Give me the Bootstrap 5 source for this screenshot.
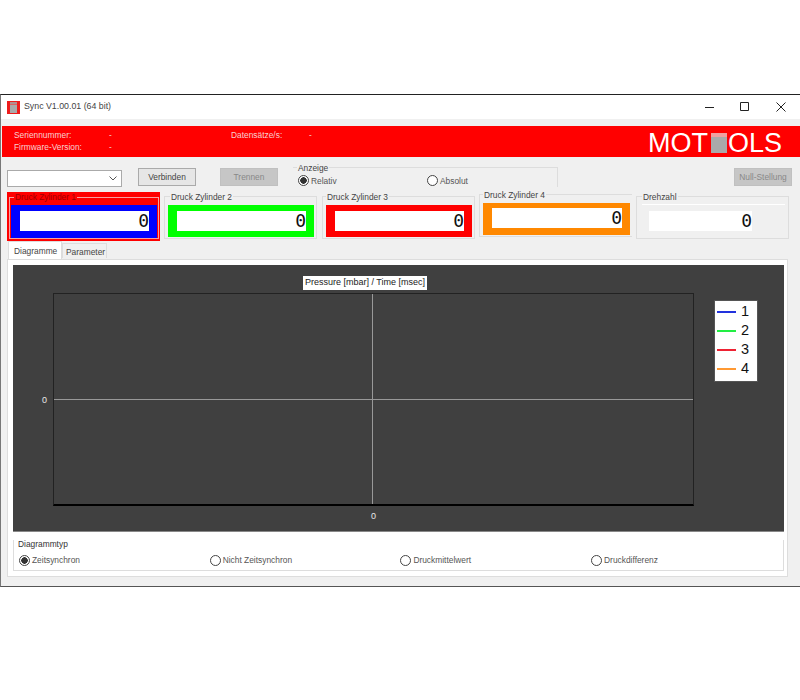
<!DOCTYPE html>
<html lang="de">
<head>
    <meta charset="UTF-8">
    <title>Sync V1.00.01 (64 bit)</title>
    <link href="https://cdn.jsdelivr.net/npm/bootstrap@5.3.0/dist/css/bootstrap.min.css" rel="stylesheet">
    <style>
        body {
            font-family: "Liberation Sans", Arial, sans-serif;
            font-size: 8.4px;
            color: #444;
            background: #fff;
        }
        .app-window {
            margin-top: 94px;
            height: 493px;
            background: #f0f0f0;
            border: 1px solid #555;
            border-top-color: #222;
            border-left-color: #777;
            border-right: 0;
        }
        .title-bar { height: 24px; background: #fff; padding: 0 1px 0 6px; color: #444; font-size: 8.8px; }
        .title-icon { width: 13px; height: 13px; background: #ee1c1c; padding: 1px 3px; margin-right: 4px; }
        .title-icon span { display: block; width: 100%; height: 100%; background: linear-gradient(#b09090 0 2px, #e06060 2px 3px, #aaa 3px); }
        .win-btn { width: 36px; height: 24px; }
        .win-btn-first { width: 35px; }
        .head-gap { height: 7px; }
        .red-head { height: 31px; background: #f00; color: #f8d0d0; margin-left: 1px; padding: 3px 18px 0 12px; }
        .head-col { line-height: 12px; }
        .head-label { width: 95px; }
        .head-label2 { width: 78px; }
        .logo-text { font-size: 27px; line-height: 26px; color: #fff; }
        .logo-box { width: 16px; height: 20px; margin: 0 1px 0 3px; background: linear-gradient(#f0a0a0 0 4px, #aaa 4px); }
        .control-row { height: 35px; padding: 11px 8px 0 6px; }
        .combo { width: 115px; height: 17px; margin-top: 2px; background: #fff; border: 1px solid #aaa; padding-right: 4px; }
        .win-button {
            width: 58px; height: 18px; padding: 0; font-size: 8.4px; line-height: 16px;
            border: 1px solid #aaa; border-radius: 0; background: #e6e6e6; color: #444;
        }
        .win-button.off, .win-button:disabled { background: #c6c6c6; border-color: #c0c0c0; color: #888; opacity: 1; }
        .display-group {
            width: 265px; height: 20px; margin: -1px 0 0 15px;
            border: 1px solid #ddd; border-bottom: 0; border-left: 0;
            padding: 6px 0 0 5px; position: relative;
        }
        .group-title { position: absolute; top: -5px; left: 4px; background: #f0f0f0; padding: 0 1px; line-height: 11px; white-space: nowrap; }
        .radio-item { color: #555; line-height: 12px; white-space: nowrap; }
        .radio-item input {
            appearance: none; width: 11px; height: 11px; margin: 0 2px 0 0;
            border: 1px solid #444; border-radius: 50%; background: #fff; flex: none;
        }
        .radio-item input:checked { background: radial-gradient(circle, #333 0 3px, #fff 3.5px); }
        .panel-row { height: 50px; padding-left: 6px; gap: 4px; }
        .press-panel {
            width: 153px; height: 43px; margin-top: 4px; flex: none;
            border: 1px solid #ddd; position: relative; padding: 8px 2px 0 3px;
        }
        .press-panel .group-title { left: 5px; top: -5px; color: #444; }
        .press-panel .title-near { left: 3px; }
        .panel-first { height: 49px; margin-top: 0; border: 0; background: #f00; padding: 13px 3px 0 4px; }
        .panel-first::before {
            content: ""; position: absolute; left: 2px; right: 1px; top: 5px; bottom: 2px;
            border: 1px solid #f6a0a0;
        }
        .panel-first .group-title { left: 7px; top: -1px; margin-top: 1px; background: #f00; color: #a00000; }
        .panel-first .value-frame { position: relative; }
        .panel-third { margin-left: 1px; }
        .panel-shift { margin-top: 2px; border-right: 0; }
        .value-frame { height: 32px; padding: 6px 8px 0 9px; }
        .frame-blue { background: #00f; height: 33px; }
        .frame-green { background: #0f0; }
        .frame-red { background: #f00; }
        .frame-orange { background: #ff8800; padding-top: 5px; }
        .value-box {
            height: 20px; background: #fff; text-align: right; color: #111;
            font-family: "DejaVu Sans Mono", "Liberation Mono", monospace;
            font-size: 18px; line-height: 20px; overflow: hidden;
        }
        .rpm-box { width: 103px; margin: 6px 0 0 9px; }
        .rpm-rule { position: absolute; left: 5px; right: 3px; top: 7px; height: 1px; background: #fff; }
        .tab-strip { height: 17px; padding-left: 7px; }
        .tab-item { height: 17px; line-height: 15px; padding: 2px 0 0 5px; color: #444; background: #f0f0f0; border: 1px solid #ddd; border-bottom: 0; }
        .tab-item.on { width: 54px; background: #fff; height: 18px; position: relative; z-index: 1; margin-top: -1px; }
        .tab-item.rest { width: 45px; margin-top: 1px; height: 15px; line-height: 12px; padding-left: 3px; }
        .tab-pane-box { height: 318px; margin: 0 12px 0 6px; background: #fff; border: 1px solid #ddd; padding: 5px 3px 0 5px; }
        .dark-area { height: 267px; background: #404040; border-bottom: 1px solid #888; position: relative; }
        .plot {
            position: absolute; left: 40px; top: 28px; width: 641px; height: 213px;
            border: 1px solid #222; border-bottom: 2px solid #000;
        }
        .plot::before { content: ""; position: absolute; left: 318px; top: 0; bottom: 0; width: 1px; background: #999; }
        .plot::after { content: ""; position: absolute; top: 105px; left: 0; right: 0; height: 1px; background: #999; }
        .plot-title {
            position: absolute; left: 290px; top: 11px; padding: 0 2px; height: 14px; line-height: 13px; font-size: 9px;
            background: #fff; color: #222; white-space: nowrap; z-index: 2;
        }
        .tick { position: absolute; color: #e8e8e8; font-size: 9px; }
        .tick-y { left: 29px; top: 129px; }
        .tick-x { left: 358px; top: 245px; }
        .legend-box {
            position: absolute; left: 701px; top: 35px; width: 44px; height: 82px;
            background: #fff; border: 1px solid #555; padding: 1px 0 0 2px; color: #111;
            font-size: 14.5px; line-height: 19px;
        }
        .legend-line { display: inline-block; width: 19px; height: 2px; margin-right: 5px; vertical-align: middle; }
        .line-blue { background: #2233dd; }
        .line-green { background: #22ee44; }
        .line-red { background: #ee2233; }
        .line-orange { background: #ff9933; }
        .type-group { height: 31px; margin-top: 8px; border: 1px solid #ddd; border-top: 0; position: relative; padding: 10px 0 0 5px; }
        .type-group .group-title { left: 3px; top: -1px; background: #fff; color: #333; }
        .type-group .radio-item { width: 190.7px; }
    </style>
</head>
<body class="m-0">
    <div class="app-window d-flex flex-column">
        <div class="title-bar d-flex align-items-center">
            <div class="title-icon"><span></span></div>
            <div class="flex-grow-1">Sync V1.00.01 (64 bit)</div>
            <div class="win-btn win-btn-first d-flex align-items-center justify-content-center">
                <svg width="10" height="10"><path d="M0 5.5H9" stroke="#222"/></svg>
            </div>
            <div class="win-btn d-flex align-items-center justify-content-center">
                <svg width="10" height="10"><path d="M.5.5H8.5V8.5H.5Z" stroke="#222" fill="none"/></svg>
            </div>
            <div class="win-btn d-flex align-items-center justify-content-center">
                <svg width="10" height="10"><path d="M.5.5L9.5 9.5M9.5.5L.5 9.5" stroke="#222" fill="none"/></svg>
            </div>
        </div>
        <div class="head-gap"></div>
        <div class="red-head d-flex">
            <div class="head-col head-label">Seriennummer:<br>Firmware-Version:</div>
            <div class="head-col" style="width: 122px">-<br>-</div>
            <div class="head-col head-label2">Datensätze/s:</div>
            <div class="head-col flex-grow-1">-</div>
            <div class="d-flex align-items-center logo-text">MOT<span class="logo-box"></span>OLS</div>
        </div>
        <div class="control-row d-flex align-items-start">
            <div class="combo d-flex align-items-center justify-content-end">
                <svg width="8" height="5"><path d="M.5.5L4 4 7.5.5" stroke="#555" fill="none"/></svg>
            </div>
            <button class="btn win-button ms-3" type="button">Verbinden</button>
            <button class="btn win-button off" type="button" style="margin-left: 24px" disabled>Trennen</button>
            <div class="display-group d-flex">
                <span class="group-title">Anzeige</span>
                <label class="radio-item d-flex align-items-center" style="width: 129px"><input type="radio" name="anz" checked>Relativ</label>
                <label class="radio-item d-flex align-items-center"><input type="radio" name="anz">Absolut</label>
            </div>
            <button class="btn win-button off ms-auto" type="button" disabled>Null-Stellung</button>
        </div>
        <div class="panel-row d-flex align-items-start">
            <div class="press-panel panel-first">
                <span class="group-title">Druck Zylinder 1</span>
                <div class="value-frame frame-blue"><div class="value-box">0</div></div>
            </div>
            <div class="press-panel">
                <span class="group-title">Druck Zylinder 2</span>
                <div class="value-frame frame-green"><div class="value-box">0</div></div>
            </div>
            <div class="press-panel panel-third">
                <span class="group-title title-near">Druck Zylinder 3</span>
                <div class="value-frame frame-red"><div class="value-box">0</div></div>
            </div>
            <div class="press-panel panel-shift">
                <span class="group-title title-near">Druck Zylinder 4</span>
                <div class="value-frame frame-orange"><div class="value-box">0</div></div>
            </div>
            <div class="press-panel">
                <div class="rpm-rule"></div>
                <span class="group-title">Drehzahl</span>
                <div class="value-box rpm-box">0</div>
            </div>
        </div>
        <div class="tab-strip d-flex">
            <div class="tab-item on">Diagramme</div>
            <div class="tab-item rest">Parameter</div>
        </div>
        <div class="tab-pane-box">
            <div class="dark-area">
                <div class="plot-title">Pressure [mbar] / Time [msec]</div>
                <div class="plot"></div>
                <span class="tick tick-y">0</span>
                <span class="tick tick-x">0</span>
                <div class="legend-box">
                    <div><span class="legend-line line-blue"></span>1</div>
                    <div><span class="legend-line line-green"></span>2</div>
                    <div><span class="legend-line line-red"></span>3</div>
                    <div><span class="legend-line line-orange"></span>4</div>
                </div>
            </div>
            <div class="type-group d-flex">
                <span class="group-title">Diagrammtyp</span>
                <label class="radio-item d-flex align-items-center"><input type="radio" name="typ" checked>Zeitsynchron</label>
                <label class="radio-item d-flex align-items-center"><input type="radio" name="typ">Nicht Zeitsynchron</label>
                <label class="radio-item d-flex align-items-center"><input type="radio" name="typ">Druckmittelwert</label>
                <label class="radio-item d-flex align-items-center"><input type="radio" name="typ">Druckdifferenz</label>
            </div>
        </div>
    </div>
    <script src="https://cdn.jsdelivr.net/npm/bootstrap@5.3.0/dist/js/bootstrap.bundle.min.js"></script>
</body>
</html>
